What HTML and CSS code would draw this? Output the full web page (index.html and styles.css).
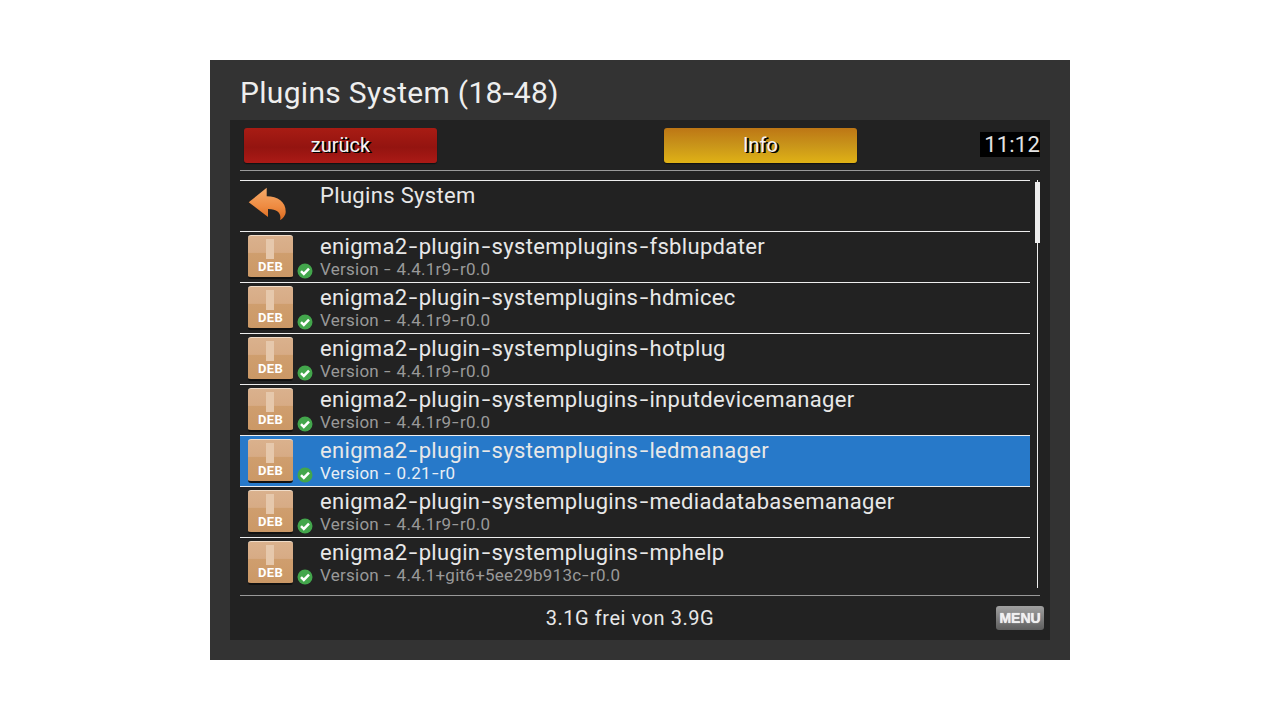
FILE: index.html
```html
<!DOCTYPE html>
<html lang="de">
<head>
<meta charset="utf-8">
<title>Plugins System</title>
<link rel="stylesheet" href="styles.css">
</head>
<body>
<svg class="defs" width="0" height="0" aria-hidden="true">
  <defs>
    <linearGradient id="arrowGrad" x1="0" y1="0" x2="0" y2="1">
      <stop offset="0" stop-color="#f6ac6c"/>
      <stop offset="0.6" stop-color="#ee8a40"/>
      <stop offset="1" stop-color="#d9691f"/>
    </linearGradient>
    <symbol id="check" viewBox="0 0 16 16">
      <circle cx="8" cy="8" r="7.500" fill="#43a64c"/>
      <path d="M4 8.200l2.800 2.700 5.200-5.300" fill="none" stroke="#fff" stroke-width="2.500"/>
    </symbol>
  </defs>
</svg>
<main class="window">
  <h1 class="title">Plugins System (18<span class="hy">-</span>48)</h1>
  <section class="panel">
    <header class="toolbar">
      <button class="btn btn-red">zurück</button>
      <button class="btn btn-yellow">Info</button>
      <time class="clock">11:12</time>
    </header>
    <div class="list-wrap">
      <ul class="list">
        <li class="row row-back">
          <div class="row-icon">
            <svg class="back-icon" width="40" height="36" viewBox="0 0 40 36"><path d="M.7 15.300L18.700.7V9.300C30 9.500 38 15 37.700 25 37.600 28 35 32 32 33 33.500 28 31 22 20 22V30Z" fill="url(#arrowGrad)"/></svg>
          </div>
          <div class="row-text"><div class="name">Plugins System</div></div>
        </li>
        <li class="row">
          <div class="row-icon"><div class="deb"><span class="deb-label">DEB</span></div><svg class="check"><use href="#check"/></svg></div>
          <div class="row-text"><div class="name">enigma2<span class="hy">-</span>plugin<span class="hy">-</span>systemplugins<span class="hy">-</span>fsblupdater</div><div class="ver">Version <span class="hy">-</span> 4.4.1r9<span class="hy">-</span>r0.0</div></div>
        </li>
        <li class="row">
          <div class="row-icon"><div class="deb"><span class="deb-label">DEB</span></div><svg class="check"><use href="#check"/></svg></div>
          <div class="row-text"><div class="name">enigma2<span class="hy">-</span>plugin<span class="hy">-</span>systemplugins<span class="hy">-</span>hdmicec</div><div class="ver">Version <span class="hy">-</span> 4.4.1r9<span class="hy">-</span>r0.0</div></div>
        </li>
        <li class="row">
          <div class="row-icon"><div class="deb"><span class="deb-label">DEB</span></div><svg class="check"><use href="#check"/></svg></div>
          <div class="row-text"><div class="name">enigma2<span class="hy">-</span>plugin<span class="hy">-</span>systemplugins<span class="hy">-</span>hotplug</div><div class="ver">Version <span class="hy">-</span> 4.4.1r9<span class="hy">-</span>r0.0</div></div>
        </li>
        <li class="row">
          <div class="row-icon"><div class="deb"><span class="deb-label">DEB</span></div><svg class="check"><use href="#check"/></svg></div>
          <div class="row-text"><div class="name">enigma2<span class="hy">-</span>plugin<span class="hy">-</span>systemplugins<span class="hy">-</span>inputdevicemanager</div><div class="ver">Version <span class="hy">-</span> 4.4.1r9<span class="hy">-</span>r0.0</div></div>
        </li>
        <li class="row row-selected">
          <div class="row-icon"><div class="deb"><span class="deb-label">DEB</span></div><svg class="check"><use href="#check"/></svg></div>
          <div class="row-text"><div class="name">enigma2<span class="hy">-</span>plugin<span class="hy">-</span>systemplugins<span class="hy">-</span>ledmanager</div><div class="ver">Version <span class="hy">-</span> 0.21<span class="hy">-</span>r0</div></div>
        </li>
        <li class="row">
          <div class="row-icon"><div class="deb"><span class="deb-label">DEB</span></div><svg class="check"><use href="#check"/></svg></div>
          <div class="row-text"><div class="name">enigma2<span class="hy">-</span>plugin<span class="hy">-</span>systemplugins<span class="hy">-</span>mediadatabasemanager</div><div class="ver">Version <span class="hy">-</span> 4.4.1r9<span class="hy">-</span>r0.0</div></div>
        </li>
        <li class="row">
          <div class="row-icon"><div class="deb"><span class="deb-label">DEB</span></div><svg class="check"><use href="#check"/></svg></div>
          <div class="row-text"><div class="name">enigma2<span class="hy">-</span>plugin<span class="hy">-</span>systemplugins<span class="hy">-</span>mphelp</div><div class="ver">Version <span class="hy">-</span> 4.4.1+git6+5ee29b913c<span class="hy">-</span>r0.0</div></div>
        </li>
      </ul>
      <div class="scrollbar"><div class="thumb"></div></div>
    </div>
    <footer class="status">
      <span class="free">3.1G frei von 3.9G</span>
      <span class="menu-key">MENU</span>
    </footer>
  </section>
</main>
</body>
</html>
```
FILE: styles.css
```css
* { box-sizing: border-box; }
html, body { margin: 0; height: 100%; }
body {
  background: #fff;
  display: flex;
  align-items: center;
  justify-content: center;
  font-family: Roboto, "Liberation Sans", sans-serif;
  color: #f0f0f0;
}
.defs { position: absolute; }
.hy {
  display: inline-block;
  transform: scaleX(1.4);
  margin: 0 .11em;
}
.window {
  width: 860px;
  height: 600px;
  background: #333;
  padding: 0 20px 20px;
  display: flex;
  flex-direction: column;
}
.title {
  margin: 0;
  height: 60px;
  padding: 15px 0 0 10px;
  font-size: 30px;
  line-height: 36px;
  font-weight: 400;
  letter-spacing: .3px;
  color: #eee;
}
.title .hy { margin: 0 .04em; }
.panel {
  flex: 1;
  background: #222;
  display: flex;
  flex-direction: column;
  padding: 0 10px;
}
.toolbar {
  height: 51px;
  flex: none;
  display: flex;
  align-items: flex-start;
  border-bottom: 1px solid #999;
  padding-left: 4px;
}
.btn {
  width: 193px;
  height: 35px;
  margin-top: 8px;
  border: 0;
  border-radius: 3px;
  padding: 0;
  font-family: inherit;
  font-size: 20px;
  line-height: 33px;
  color: #f4f4f4;
  text-shadow: 1px 1px 0 #000, 2px 1px 0 #000;
  box-shadow: 0 1px 1px #111;
}
.btn-red { background: linear-gradient(#a81c14, #941410 55%, #ab1a16); }
.btn-yellow {
  margin-left: 227px;
  background: linear-gradient(#bd7615, #c9951a 50%, #e0b215);
}
.clock {
  margin-left: auto;
  margin-top: 12px;
  width: 60px;
  height: 25px;
  background: #000;
  font-size: 22px;
  line-height: 25px;
  font-weight: 400;
  letter-spacing: .2px;
  text-align: right;
  color: #e4e4e4;
}
.list-wrap {
  flex: none;
  display: flex;
  gap: 5px;
  margin-top: 9px;
  height: 408px;
}
.list {
  width: 790px;
  margin: 0;
  padding: 0;
  list-style: none;
}
.row {
  height: 51px;
  border-top: 1px solid #eee;
  display: flex;
}
.row-selected { background: #2779c9; }
.row-selected .ver { color: #e8eef5; }
.row-icon {
  width: 80px;
  flex: none;
  position: relative;
}
.back-icon { position: absolute; left: 0; top: 6px; margin-left: 8px; }
.deb {
  position: absolute;
  left: 8px;
  top: 3px;
  width: 45px;
  height: 44px;
  border-radius: 3px;
  border-top: 1px solid #f0dcc8;
  border-bottom: 2px solid #111;
  background: linear-gradient(#dab18d 0, #d7ab85 40%, #cf9e6e 42%, #cb9866 100%);
  text-align: center;
  overflow: hidden;
}
.deb::before {
  content: "";
  position: absolute;
  left: 18px;
  top: 3px;
  width: 8px;
  height: 20px;
  background: #e6c8ac;
}
.deb-label {
  position: absolute;
  left: 0;
  right: 0;
  top: 23px;
  font-size: 13px;
  line-height: 15px;
  font-weight: 700;
  letter-spacing: .3px;
  color: #fff;
}
.check {
  position: absolute;
  left: 57px;
  top: 31px;
  width: 16px;
  height: 16px;
}
.row-text { min-width: 0; padding-top: 1px; }
.name {
  font-size: 22px;
  line-height: 28px;
  letter-spacing: .33px;
  color: #e8e8e8;
}
.ver {
  font-size: 17px;
  line-height: 16px;
  letter-spacing: .25px;
  color: #999;
}
.scrollbar {
  width: 5px;
  position: relative;
  display: flex;
  justify-content: center;
}
.scrollbar::before {
  content: "";
  width: 1px;
  height: 100%;
  background: #eee;
}
.thumb {
  position: absolute;
  left: 0;
  top: 2px;
  width: 5px;
  height: 61px;
  background: #eee;
}
.status {
  flex: none;
  margin-top: 7px;
  height: 45px;
  border-top: 1px solid #999;
  display: flex;
  align-items: center;
  justify-content: center;
  padding-right: 20px;
  position: relative;
}
.free {
  font-size: 20px;
  line-height: 42px;
  letter-spacing: .55px;
  color: #e8e8e8;
}
.menu-key {
  position: absolute;
  right: -4px;
  top: 10px;
  width: 48px;
  height: 24px;
  border-radius: 3px;
  background: linear-gradient(#a0a0a0, #5e5e5e);
  font-family: "Liberation Sans", sans-serif;
  font-size: 14px;
  line-height: 24px;
  font-weight: 700;
  text-align: center;
  color: #f0f0f0;
  text-shadow: 0 0 1px #fff;
}
```
